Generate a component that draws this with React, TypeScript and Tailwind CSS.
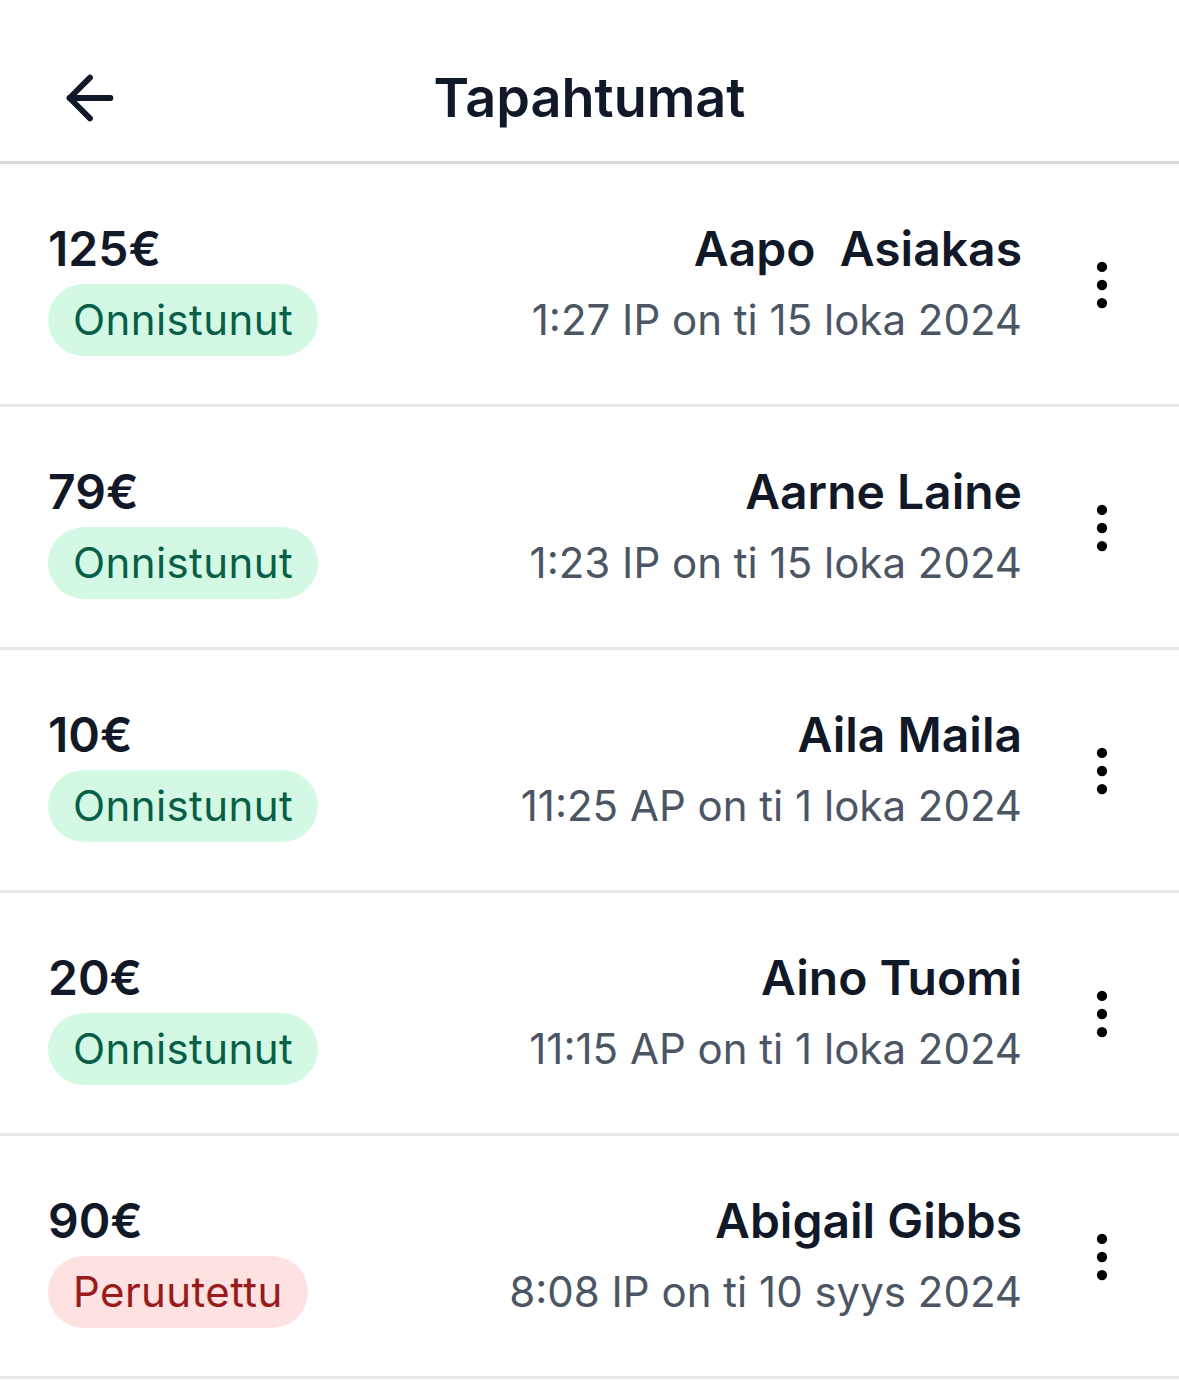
import { ArrowLeft, EllipsisVertical } from 'lucide-react';

type Status = 'ok' | 'cancelled';

interface Tx {
  amount: string;
  name: string;
  date: string;
  status: Status;
}

const rows: Tx[] = [
  { amount: '125€', name: 'Aapo\u00a0 Asiakas', date: '1:27 IP on ti 15 loka 2024', status: 'ok' },
  { amount: '79€', name: 'Aarne Laine', date: '1:23 IP on ti 15 loka 2024', status: 'ok' },
  { amount: '10€', name: 'Aila Maila', date: '11:25 AP on ti 1 loka 2024', status: 'ok' },
  { amount: '20€', name: 'Aino Tuomi', date: '11:15 AP on ti 1 loka 2024', status: 'ok' },
  { amount: '90€', name: 'Abigail Gibbs', date: '8:08 IP on ti 10 syys 2024', status: 'cancelled' },
];

function Badge({ status }: { status: Status }) {
  if (status === 'ok') {
    return (
      <span className="inline-flex h-[72px] items-center rounded-full bg-[#d3f8e4] px-[25px] text-[42px] leading-none tracking-[0.4px] text-[#065f46]">
        Onnistunut
      </span>
    );
  }
  return (
    <span className="inline-flex h-[72px] items-center rounded-full bg-[#fee2e2] px-[25px] text-[42px] leading-none tracking-[0.4px] text-[#991b1b]">
      Peruutettu
    </span>
  );
}

export default function App() {
  return (
    <div className="min-h-screen w-[1179px] bg-white text-[#111827]" style={{ fontFamily: 'Inter, "Noto Sans", sans-serif' }}>
      {/* Header */}
      <header className="grid h-[164px] grid-cols-[1fr_auto_1fr] items-center border-b-[3px] border-[#d9d9d9] pt-[35px]">
        <div className="pl-[55px]">
          <ArrowLeft size={70} strokeWidth={2} className="text-[#111827]" />
        </div>
        <h1 className="text-[54px] font-semibold leading-none">Tapahtumat</h1>
        <div />
      </header>

      {/* List */}
      <ul>
        {rows.map((row, i) => (
          <li
            key={i}
            className="flex h-[243px] items-center justify-between border-b-[3px] border-[#e5e7eb] pl-[48px] pr-[46px] pt-[7px]"
          >
            <div className="flex flex-col items-start gap-[5px]">
              <span className="text-[48px] font-semibold leading-[60px]">{row.amount}</span>
              <Badge status={row.status} />
            </div>
            <div className="flex items-center gap-[49px]">
              <div className="flex flex-col items-end gap-[5px]">
                <span className="text-[48px] font-semibold leading-[60px]">{row.name}</span>
                <span className="text-[42px] leading-[72px] text-[#4b5563]">{row.date}</span>
              </div>
              <EllipsisVertical size={62} strokeWidth={2} className="-mt-[6px] text-black" />
            </div>
          </li>
        ))}
      </ul>
    </div>
  );
}
